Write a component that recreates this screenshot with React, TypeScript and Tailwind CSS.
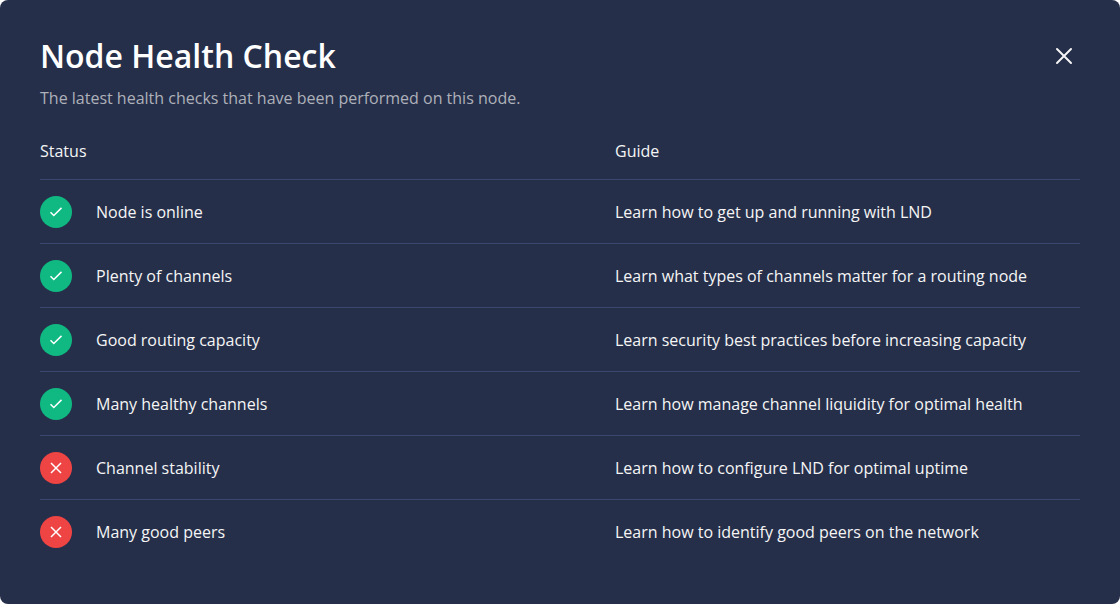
const checks = [
  { label: "Node is online", ok: true, guide: "Learn how to get up and running with LND" },
  { label: "Plenty of channels", ok: true, guide: "Learn what types of channels matter for a routing node" },
  { label: "Good routing capacity", ok: true, guide: "Learn security best practices before increasing capacity" },
  { label: "Many healthy channels", ok: true, guide: "Learn how manage channel liquidity for optimal health" },
  { label: "Channel stability", ok: false, guide: "Learn how to configure LND for optimal uptime" },
  { label: "Many good peers", ok: false, guide: "Learn how to identify good peers on the network" },
];

function StatusIcon({ ok }: { ok: boolean }) {
  return (
    <span
      className={`flex size-8 shrink-0 items-center justify-center rounded-full text-white ${ok ? "bg-[#10b981]" : "bg-[#ef4444]"}`}
    >
      <svg viewBox="0 0 16 16" className="size-4" fill="none" stroke="currentColor" strokeWidth="1.5" aria-hidden="true">
        {ok ? <path d="M2.5 8.2 5.8 11.5 13.5 3.9" /> : <path d="m3 3 10 10M13 3 3 13" />}
      </svg>
    </span>
  );
}

export default function App() {
  return (
    <main className="min-h-screen rounded-lg bg-[#252f4a] px-10 pt-8 pb-10 font-['Open_Sans',sans-serif] text-base text-[#f5f5f5]">
      <header className="flex items-start justify-between">
        <div>
          <h1 className="text-[32px] leading-12 font-semibold text-white">Node Health Check</h1>
          <p className="mt-1 leading-7 text-[#aeb1b9]">The latest health checks that have been performed on this node.</p>
        </div>
        <button type="button" aria-label="Close" className="mt-2 flex size-8 items-center justify-center">
          <svg viewBox="0 0 16 16" className="size-4 overflow-visible" fill="none" stroke="currentColor" strokeWidth="2" strokeLinecap="round" aria-hidden="true">
            <path d="m1 1 14 14M15 1 1 15" />
          </svg>
        </button>
      </header>
      <table className="mt-3 w-full table-fixed border-separate border-spacing-0 text-left">
        <thead>
          <tr className="h-14 *:border-b *:border-[#3a486e] *:pb-0.5">
            <th scope="col" className="font-normal">Status</th>
            <th scope="col" className="w-[465px] font-normal">Guide</th>
          </tr>
        </thead>
        <tbody>
          {checks.map(({ label, ok, guide }) => (
            <tr key={label} className="h-16 *:border-b *:border-[#3a486e] last:*:border-transparent">
              <td>
                <div className="flex items-center gap-6">
                  <StatusIcon ok={ok} />
                  {label}
                </div>
              </td>
              <td>
                <a href="#guide">{guide}</a>
              </td>
            </tr>
          ))}
        </tbody>
      </table>
    </main>
  );
}
